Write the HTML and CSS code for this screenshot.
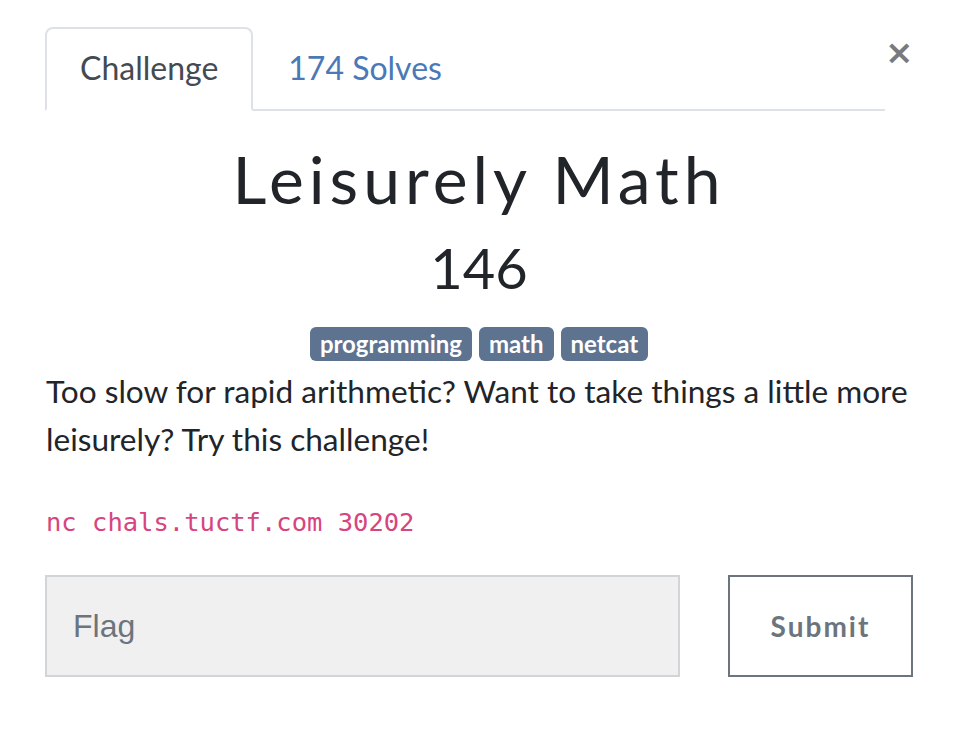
FILE: index.html
```html
<!DOCTYPE html>
<html>
<head>
<meta charset="utf-8">
<link rel="stylesheet" href="styles.css">
</head>
<body>
<div class="modal">
  <div class="header">
    <nav class="tabs">
      <a class="tab active">Challenge</a>
      <a class="tab">174 Solves</a>
    </nav>
    <button class="close" aria-label="Close">&times;</button>
  </div>
  <h1 class="title">Leisurely Math</h1>
  <div class="points">146</div>
  <div class="tags">
    <span class="tag">programming</span>
    <span class="tag">math</span>
    <span class="tag">netcat</span>
  </div>
  <p class="desc">Too slow for rapid arithmetic? Want to take things a little more leisurely? Try this challenge!</p>
  <p class="code"><code>nc chals.tuctf.com 30202</code></p>
  <form class="submit-row">
    <input class="flag" type="text" placeholder="Flag">
    <button class="submit" type="button">Submit</button>
  </form>
</div>
</body>
</html>
```
FILE: styles.css
```css
html, body {
  margin: 0;
  background: #fff;
}
body {
  font-family: Lato, "Open Sans", sans-serif;
  color: #212529;
}
.modal {
  width: 868px;
  padding: 27px 0 0 45px;
}
.header {
  display: flex;
  align-items: flex-start;
}
.tabs {
  display: flex;
  flex-shrink: 0;
  width: 840px;
  border-bottom: 2px solid #dee2e6;
}
.tab {
  font-size: 32px;
  line-height: 40px;
  padding: 19px 33px 21px 33px;
  color: #4a79b5;
  border: 2px solid transparent;
  border-radius: 8px 8px 0 0;
  margin-bottom: -2px;
}
.tab.active {
  color: #444a52;
  border-color: #dee2e6 #dee2e6 #fff #dee2e6;
  background: #fff;
}
.close {
  margin-left: auto;
  border: 0;
  background: none;
  padding: 0;
  font-family: "DejaVu Sans", sans-serif;
  font-size: 34px;
  font-weight: bold;
  line-height: 50px;
  color: #7a7a7a;
  margin-right: 2px;
}
.title {
  font-family: Lato, sans-serif;
  font-weight: 400;
  font-size: 66px;
  letter-spacing: 5px;
  line-height: 80px;
  text-align: center;
  margin: 28px 0 0 0;
}
.points {
  text-align: center;
  font-size: 56px;
  line-height: 70px;
  margin-top: 14px;
}
.tags {
  display: flex;
  justify-content: center;
  gap: 7px;
  margin-top: 24px;
}
.tag {
  background: #5e7390;
  color: #fff;
  font-weight: bold;
  font-size: 24px;
  line-height: 34px;
  padding: 0 10px;
  border-radius: 6px;
}
.desc {
  font-size: 31.6px;
  line-height: 48px;
  margin: 6px 0 0 1px;
}
.code {
  margin: 39px 0 0 1px;
  line-height: 40px;
}
.code code {
  font-family: "DejaVu Sans Mono", monospace;
  font-size: 25.5px;
  color: #d6457f;
}
.submit-row {
  display: flex;
  margin-top: 30px;
  gap: 48px;
}
.flag {
  width: 635px;
  height: 102px;
  box-sizing: border-box;
  background: #f0f0f0;
  border: 2px solid #d2d5d8;
  padding: 0 26px;
  font-family: "Liberation Sans", Arial, sans-serif;
  font-size: 32px;
  color: #495057;
  outline: none;
}
.flag::placeholder {
  color: #6c757d;
}
.submit {
  width: 185px;
  height: 102px;
  box-sizing: border-box;
  background: #fff;
  border: 2px solid #6c757d;
  font-family: Lato, sans-serif;
  font-weight: bold;
  font-size: 28px;
  letter-spacing: 2px;
  color: #6c757d;
}
```
